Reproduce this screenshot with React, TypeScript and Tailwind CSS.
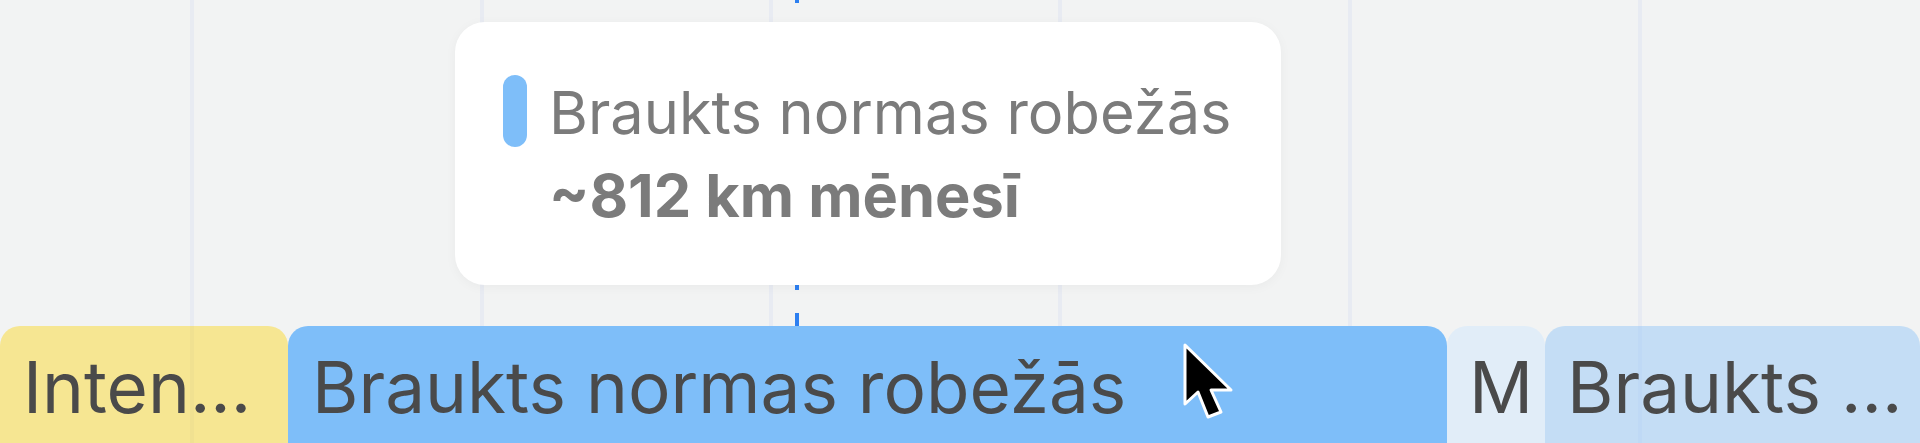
import React from "react";

const gridLines = [190, 480, 769, 1058, 1348, 1638];

function Cursor() {
  return (
    <svg width="56" height="88" viewBox="-4 -4 56 88" className="absolute left-[1181px] top-[341px] z-30">
      <path
        d="M0 0 L0 59 L13 47 L23 72 L36 67 L26 45 L46 45 Z"
        fill="#000"
        stroke="#fff"
        strokeWidth="3"
        strokeLinejoin="round"
      />
    </svg>
  );
}

export default function App() {
  return (
    <div className="relative w-[1920px] h-[443px] overflow-hidden bg-[#f2f3f3] flex flex-col justify-end font-[Inter,'Noto_Sans',sans-serif]">
      {gridLines.map((x) => (
        <div
          key={x}
          className="absolute top-0 bottom-0 w-[4px] bg-[#e8ebf2]"
          style={{ left: x }}
        />
      ))}
      <svg className="absolute left-[795px] top-0" width="4" height="330">
        <line
          x1="2"
          y1="0"
          x2="2"
          y2="330"
          stroke="#2d7ff0"
          strokeWidth="4"
          strokeDasharray="18 23"
          strokeDashoffset="15"
        />
      </svg>

      <div className="relative z-10 flex h-[117px] text-[71px] leading-[86px] text-[#4a4a4a]">
        <div className="w-[288px] shrink-0 overflow-hidden rounded-t-[20px] bg-[#fcd200]/40 pl-[23px] pt-[18px]">
          <div className="whitespace-nowrap">Inten...</div>
        </div>
        <div className="w-[1159px] shrink-0 overflow-hidden rounded-t-[20px] bg-[#7ebef9] pl-[24px] pt-[18px]">
          <div className="whitespace-nowrap">Braukts normas robežās</div>
        </div>
        <div className="w-[98px] shrink-0 overflow-hidden rounded-t-[20px] bg-[#e1edf8] pl-[22px] pt-[18px]">
          <div className="whitespace-nowrap">M</div>
        </div>
        <div className="flex-1 min-w-0 overflow-hidden rounded-t-[20px] bg-[#96c7f7]/50 pl-[22px] pt-[18px]">
          <div className="whitespace-nowrap">Braukts ...</div>
        </div>
      </div>

      <div className="absolute left-[455px] top-[22px] z-20 w-[826px] h-[263px] rounded-[30px] bg-white shadow-[0_2px_12px_rgba(0,0,0,0.04)] pl-[48px] pt-[49px]">
        <div className="flex gap-[22px]">
          <div className="mt-[4px] w-[24px] h-[72px] shrink-0 rounded-full bg-[#7ebef9]" />
          <div className="text-[59.5px] leading-[83px] text-[#7b7b7b]">
            <div className="whitespace-nowrap">Braukts normas robežās</div>
            <div className="whitespace-nowrap font-bold">~812 km mēnesī</div>
          </div>
        </div>
      </div>

      <Cursor />
    </div>
  );
}
